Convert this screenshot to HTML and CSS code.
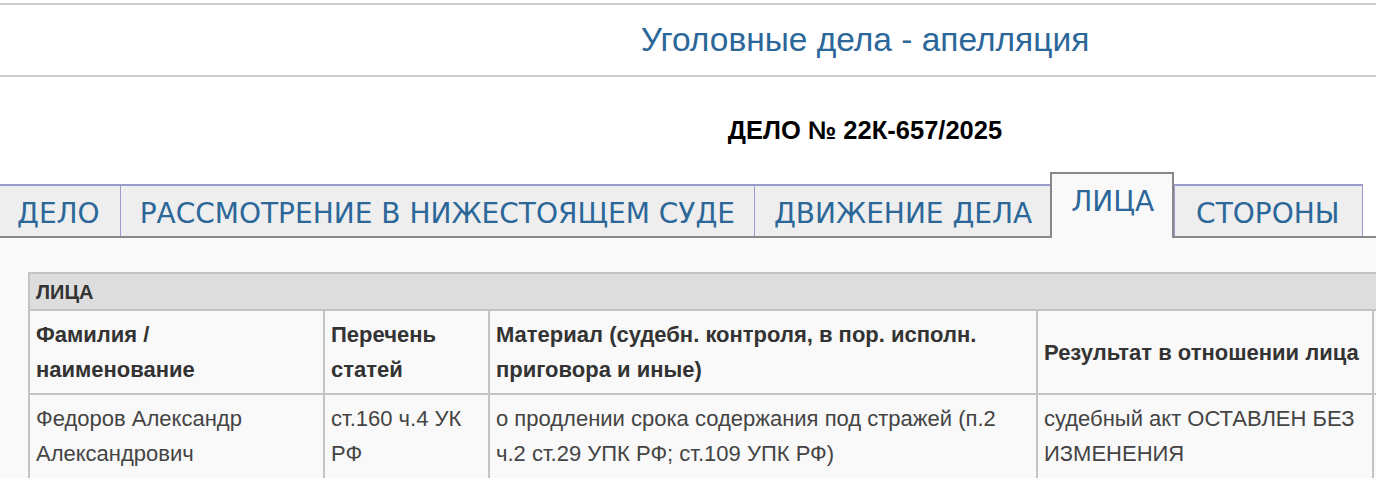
FILE: index.html
```html
<!DOCTYPE html>
<html lang="ru">
<head>
    <meta charset="UTF-8">
    <title>Уголовные дела - апелляция</title>
    <link rel="stylesheet" href="styles.css">
</head>
<body>
    <div class="title-bar">
        <div class="title-side"></div>
        <h1 class="title">Уголовные дела - апелляция</h1>
    </div>

    <div class="case-head">
        <div class="title-side"></div>
        <div class="case-number">ДЕЛО № 22К-657/2025</div>
    </div>

    <ul class="tabs">
        <li class="tab">ДЕЛО</li>
        <li class="tab">РАССМОТРЕНИЕ В НИЖЕСТОЯЩЕМ СУДЕ</li>
        <li class="tab">ДВИЖЕНИЕ ДЕЛА</li>
        <li class="tab active">ЛИЦА</li>
        <li class="tab">СТОРОНЫ</li>
    </ul>

    <div class="panel">
        <table class="persons">
            <colgroup>
                <col class="col-name">
                <col class="col-articles">
                <col class="col-material">
                <col class="col-result">
                <col class="col-extra">
            </colgroup>
            <tr>
                <th class="caption" colspan="5">ЛИЦА</th>
            </tr>
            <tr>
                <th>Фамилия /<br>наименование</th>
                <th>Перечень статей</th>
                <th>Материал (судебн. контроля, в пор. исполн. приговора и иные)</th>
                <th>Результат в отношении лица</th>
                <th></th>
            </tr>
            <tr>
                <td>Федоров Александр Александрович</td>
                <td>ст.160 ч.4 УК РФ</td>
                <td>о продлении срока содержания под стражей (п.2 ч.2 ст.29 УПК РФ; ст.109 УПК РФ)</td>
                <td>судебный акт ОСТАВЛЕН БЕЗ ИЗМЕНЕНИЯ</td>
                <td></td>
            </tr>
        </table>
    </div>
</body>
</html>
```

FILE: styles.css
```css
body {
    margin: 0;
    padding-top: 3px;
    font-family: "Liberation Sans", Arial, sans-serif;
    background-color: #fff;
    overflow: hidden;
}
.title-bar {
    display: flex;
    height: 70px;
    border-top: 2px solid #ccc;
    border-bottom: 2px solid #ccc;
    align-items: center;
}
.title-side {
    width: 354px;
    flex: none;
}
.title {
    flex: 1;
    margin: 0;
    text-align: center;
    font-weight: normal;
    font-size: 33.5px;
    color: #2b6799;
}
.case-head {
    display: flex;
    height: 94px;
    align-items: center;
}
.case-number {
    flex: 1;
    text-align: center;
    font-weight: bold;
    font-size: 25.5px;
    color: #000;
    padding-top: 12px;
}
.tabs {
    display: flex;
    align-items: flex-end;
    margin: 0;
    padding: 0;
    list-style: none;
    height: 65px;
    border-bottom: 2px solid #888;
}
.tab {
    height: 52px;
    box-sizing: border-box;
    padding: 0 19px;
    border: 1px solid #9c9ccc;
    border-top-width: 2px;
    border-bottom: none;
    margin-left: -1px;
    background-color: #eee;
    font-family: "DejaVu Sans", Verdana, sans-serif;
    font-size: 28px;
    line-height: 55px;
    color: #2b6799;
}
.tab:first-child {
    margin-left: 0;
    border-left: none;
    padding-left: 17px;
    padding-right: 20px;
}
.tab.active {
    height: 66px;
    margin-bottom: -2px;
    margin-left: -2px;
    border: 2px solid #888;
    border-bottom: none;
    background-color: #f9f9f9;
    line-height: 56px;
    padding: 0 18px 0 19px;
}
.tab.active + .tab {
    margin-left: 0;
    padding: 0 22px 0 21px;
}
.panel {
    background-color: #f9f9f9;
    padding: 34px 0 0 28px;
    height: 300px;
}
.persons {
    border-collapse: collapse;
    width: 1444px;
    table-layout: fixed;
    font-size: 22px;
    color: #444;
}
.persons th,
.persons td {
    border: 2px solid #c4c4c4;
    padding: 6px 6px;
    text-align: left;
    vertical-align: middle;
    line-height: 35px;
}
.persons td {
    vertical-align: top;
    padding-bottom: 16px;
}
.persons th {
    color: #333;
}
.persons .caption {
    background-color: #ddd;
    font-size: 20px;
    line-height: 22px;
    padding: 7px 6px 6px;
}
.col-name { width: 295px; }
.col-articles { width: 165px; }
.col-material { width: 548px; }
.col-result { width: 336px; }
.col-extra { width: 100px; }
```
